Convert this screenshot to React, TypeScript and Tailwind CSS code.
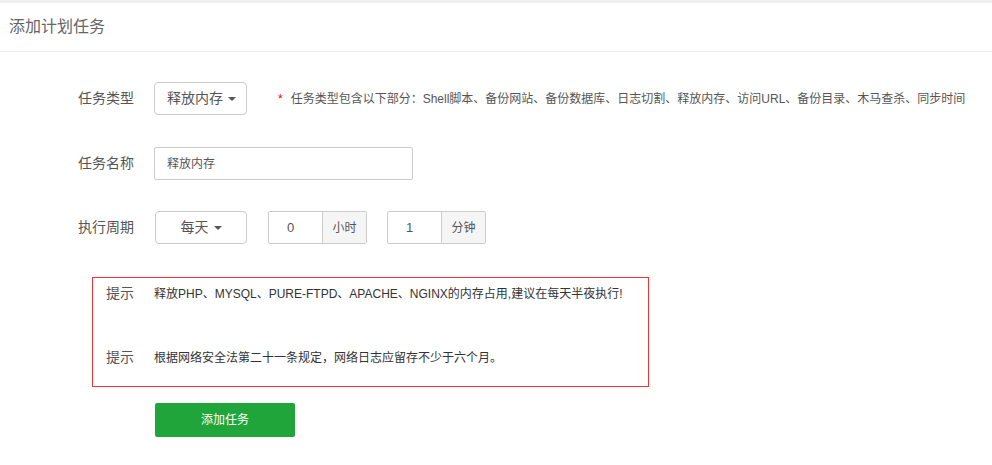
const font = "font-['Liberation_Sans','Noto_Sans_CJK_SC',sans-serif]";

function Caret() {
  return <span className="ml-[5px] inline-block h-0 w-0 border-x-[4px] border-t-[4px] border-x-transparent border-t-[#555] align-middle" />;
}

function Row({ label, children, className = "" }: { label: string; children: React.ReactNode; className?: string }) {
  return (
    <div className={`flex h-[33px] items-center ${className}`}>
      <label className="w-[134px] pr-0 text-right text-[14px] text-[#555]">{label}</label>
      <div className="ml-[20px] flex items-center">{children}</div>
    </div>
  );
}

function UnitInput({ value, unit }: { value: string; unit: string }) {
  return (
    <div className="flex h-[33px] rounded-[2px] border border-[#ccc]">
      <div className="flex w-[53px] items-center pl-[18px] text-[13px] text-[#555]">{value}</div>
      <div className="flex w-[44px] items-center justify-center border-l border-[#ccc] bg-[#f5f5f5] text-[12px] text-[#555]">
        {unit}
      </div>
    </div>
  );
}

export default function App() {
  return (
    <div className={`min-h-[465px] bg-[#f0f0f0] pt-[3px] ${font}`}>
      <div className="min-h-[462px] bg-white">
        <div className="h-[49px] border-b border-[#eee] px-[9px] text-[16px] leading-[48px] text-[#666]">添加计划任务</div>

        <div className="pt-[30px]">
          <Row label="任务类型">
            <div className="flex h-[33px] w-[93px] items-center rounded-[4px] border border-[#ccc] pl-[12px] text-[14px] text-[#555]">
              释放内存
              <Caret />
            </div>
            <span className="ml-[31px] text-[12px] text-[#f00]">*</span>
            <span className="ml-[8px] text-[12px] text-[#555]">
              任务类型包含以下部分：Shell脚本、备份网站、备份数据库、日志切割、释放内存、访问URL、备份目录、木马查杀、同步时间
            </span>
          </Row>

          <Row label="任务名称" className="mt-[32px]">
            <div className="flex h-[33px] w-[259px] items-center rounded-[2px] border border-[#ccc] pl-[12px] text-[12px] text-[#555]">
              释放内存
            </div>
          </Row>

          <Row label="执行周期" className="mt-[31px]">
            <div className="ml-[1px] flex h-[33px] w-[92px] items-center justify-center rounded-[4px] border border-[#ccc] text-[14px] text-[#555]">
              每天
              <Caret />
            </div>
            <div className="ml-[21px]">
              <UnitInput value="0" unit="小时" />
            </div>
            <div className="ml-[20px]">
              <UnitInput value="1" unit="分钟" />
            </div>
          </Row>

          <div className="ml-[92px] mt-[33px] h-[110px] w-[557px] border border-[#e33] pl-[13px]">
            <div className="flex h-[31px] items-center">
              <span className="w-[28px] text-[14px] text-[#555]">提示</span>
              <span className="ml-[20px] text-[12px] text-[#333]">
                释放PHP、MYSQL、PURE-FTPD、APACHE、NGINX的内存占用,建议在每天半夜执行!
              </span>
            </div>
            <div className="mt-[33px] flex h-[31px] items-center">
              <span className="w-[28px] text-[14px] text-[#555]">提示</span>
              <span className="ml-[20px] text-[12px] text-[#333]">根据网络安全法第二十一条规定，网络日志应留存不少于六个月。</span>
            </div>
          </div>

          <button className="ml-[155px] mt-[16px] h-[34px] w-[140px] rounded-[2px] bg-[#20a53a] text-[12px] text-white">
            添加任务
          </button>
        </div>
      </div>
    </div>
  );
}
